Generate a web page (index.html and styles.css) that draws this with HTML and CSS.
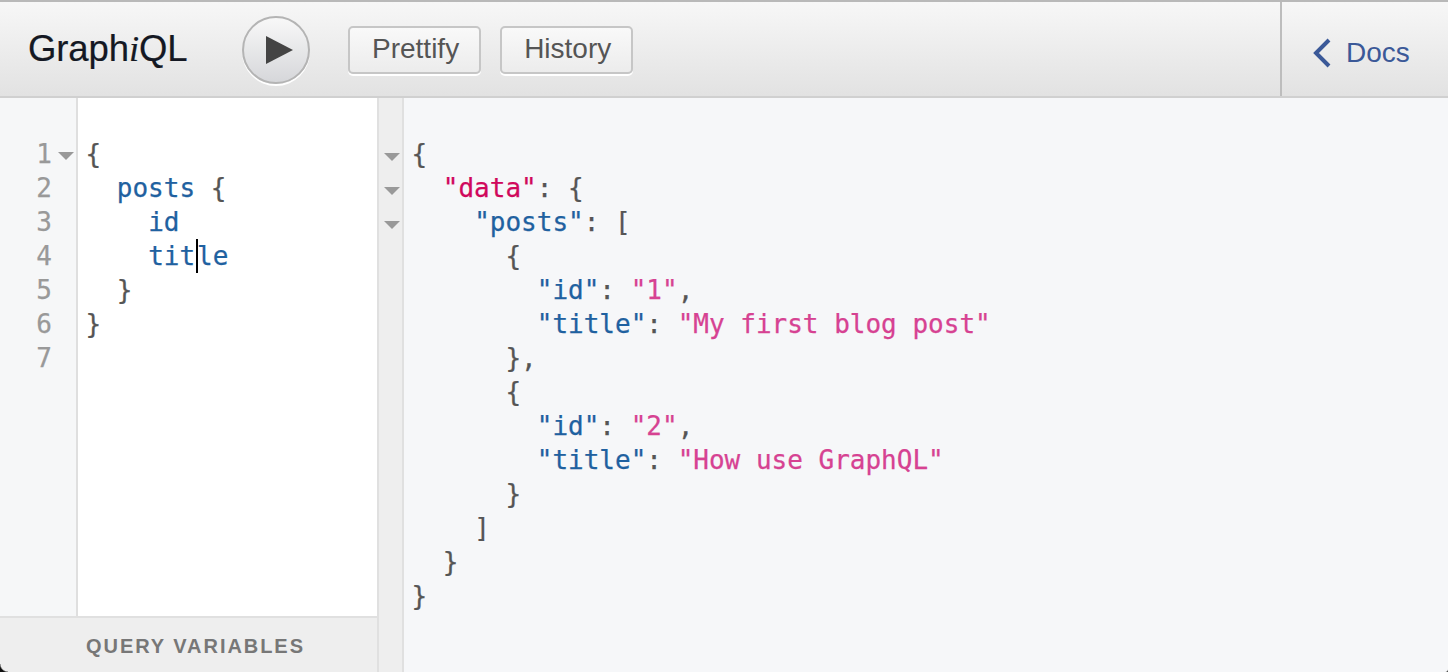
FILE: index.html
```html
<!DOCTYPE html>
<html lang="en">
<head>
<meta charset="utf-8">
<title>GraphiQL</title>
<link rel="stylesheet" href="styles.css">
</head>
<body>
<div class="app">
  <header class="topbar">
    <div class="title">Graph<em>i</em>QL</div>
    <button class="run" aria-label="Run">
      <svg width="27" height="28" viewBox="0 0 27 28"><path class="run-tri" d="M0 0L27 14L0 28Z"/></svg>
    </button>
    <button class="tool first">Prettify</button>
    <button class="tool">History</button>
    <div class="spacer"></div>
    <div class="docs">
      <svg width="22" height="32" viewBox="0 0 22 32"><path class="chev" d="M18 3L5 16L18 29"/></svg>
      <span>Docs</span>
    </div>
  </header>
  <main class="panes">
    <section class="left">
      <div class="editor">
        <div class="gutter">
          <div class="ln">1<svg class="fold" width="16" height="8" viewBox="0 0 16 8"><path d="M0 0H16L8 8Z"/></svg></div>
          <div class="ln">2</div>
          <div class="ln">3</div>
          <div class="ln">4</div>
          <div class="ln">5</div>
          <div class="ln">6</div>
          <div class="ln">7</div>
        </div>
        <pre class="code query"><span class="p">{</span>
  <span class="f">posts</span> <span class="p">{</span>
    <span class="f">id</span>
    <span class="f">tit<span class="cursor"></span>le</span>
  <span class="p">}</span>
<span class="p">}</span>
</pre>
      </div>
      <div class="vars">QUERY VARIABLES</div>
    </section>
    <section class="result">
      <div class="rgutter">
        <div class="rline"><svg class="fold" width="16" height="8" viewBox="0 0 16 8"><path d="M0 0H16L8 8Z"/></svg></div>
        <div class="rline"><svg class="fold" width="16" height="8" viewBox="0 0 16 8"><path d="M0 0H16L8 8Z"/></svg></div>
        <div class="rline"><svg class="fold" width="16" height="8" viewBox="0 0 16 8"><path d="M0 0H16L8 8Z"/></svg></div>
      </div>
      <pre class="code output"><span class="p">{</span>
  <span class="k">"data"</span><span class="p">: {</span>
    <span class="kb">"posts"</span><span class="p">: [</span>
      <span class="p">{</span>
        <span class="kb">"id"</span><span class="p">:</span> <span class="s">"1"</span><span class="p">,</span>
        <span class="kb">"title"</span><span class="p">:</span> <span class="s">"My first blog post"</span>
      <span class="p">},</span>
      <span class="p">{</span>
        <span class="kb">"id"</span><span class="p">:</span> <span class="s">"2"</span><span class="p">,</span>
        <span class="kb">"title"</span><span class="p">:</span> <span class="s">"How use GraphQL"</span>
      <span class="p">}</span>
    <span class="p">]</span>
  <span class="p">}</span>
<span class="p">}</span></pre>
    </section>
  </main>
  <div class="corner-left"></div>
  <div class="corner-right"></div>
</div>
</body>
</html>
```
FILE: styles.css
```css
* { box-sizing: border-box; }
html, body { margin: 0; height: 100%; overflow: hidden; }
.app { position: relative; width: 1448px; height: 672px; display: flex; flex-direction: column; font-family: "Liberation Sans", Arial, sans-serif; }
.corner-left { position: absolute; left: 0; bottom: 0; width: 8px; height: 8px; background: radial-gradient(circle at 100% 0, transparent 7px, #111 8.5px); }
.corner-right { position: absolute; right: 0; bottom: 0; width: 3px; height: 3px; background: radial-gradient(circle at 0 0, transparent 2.5px, #555 3.5px); }
.topbar {
  height: 98px; display: flex; align-items: stretch; flex: none;
  border-top: 2px solid #b9b9b9; border-bottom: 2px solid #d0d0d0;
  background: linear-gradient(#f7f7f7, #e2e2e2);
}
.title { margin: 27px 0 0 28px; width: 160px; font-size: 36.5px; line-height: 40px; color: #141823; letter-spacing: -0.1px; white-space: nowrap; -webkit-text-stroke: 0.2px currentColor; }
.title em { font-family: "Liberation Serif", serif; font-style: italic; }
.run {
  margin: 14px 0 0 54px; width: 68px; height: 68px; border-radius: 50%; padding: 0 0 0 6px;
  border: 2px solid #b4b4b4; background: linear-gradient(#f8f8f8, #d6d7da);
  box-shadow: 0 2px 0 #fff; display: flex; align-items: center; justify-content: center;
}
.run-tri { fill: #444; }
.tool {
  margin: 24px 0 0 19px; height: 48px; padding: 0 20px 2px 22px; border: 2px solid #c6c6c6; border-radius: 5px;
  background: linear-gradient(#f9f9f9, #ececec); box-shadow: 0 2px 0 #fff;
  font: 28px "Liberation Sans", Arial, sans-serif; color: #555;
}
.tool.first { margin-left: 38px; }
.spacer { flex: 1; }
.docs {
  width: 168px; border-left: 2px solid #bdbdbd; display: flex; align-items: center; gap: 13px; padding: 8px 0 0 29px;
  font-size: 28px; color: #3b5998;
}
.chev { fill: none; stroke: #3b5998; stroke-width: 4; }
.panes { flex: 1; display: flex; min-height: 0; }
.left { width: 377px; flex: none; display: flex; flex-direction: column; background: #fff; }
.editor { flex: 1; display: flex; min-height: 0; }
.gutter { width: 78px; flex: none; background: #f6f7f8; border-right: 2px solid #dfdfdf; padding-top: 39px; }
.ln {
  position: relative; height: 34px; padding-right: 24px; text-align: right;
  font: 26px/34px "DejaVu Sans Mono", monospace; color: #999; -webkit-text-stroke: 0.25px currentColor;
}
.ln .fold { position: absolute; left: 58px; top: 15px; }
.fold path { fill: #999; }
.code { margin: 0; font: 26px/34px "DejaVu Sans Mono", monospace; color: #555; -webkit-text-stroke: 0.25px currentColor; }
.query { padding: 39px 0 0 7.5px; }
.output { padding: 39px 0 0 7.5px; flex: 1; }
.f { color: #1f61a0; }
.p { color: #555; }
.k { color: #d0085c; }
.kb { color: #1f61a0; }
.s { color: #d64292; }
.cursor { display: inline-block; width: 0; height: 34px; border-left: 2px solid #000; margin-left: 1px; margin-right: -1px; vertical-align: -8px; }
.vars {
  height: 56px; flex: none; border-top: 2px solid #e0e0e0; background: #eeeeee; text-align: center; padding-left: 14px;
  font-size: 20px; line-height: 57px; font-weight: bold; letter-spacing: 1.95px; color: #777;
}
.result { flex: 1; display: flex; background: #f6f7f9; min-width: 0; }
.rgutter { width: 27px; flex: none; background: #eeeeee; border-left: 2px solid #e0e0e0; border-right: 2px solid #e0e0e0; padding-top: 41px; }
.rline { height: 34px; position: relative; }
.rline .fold { position: absolute; left: 5px; top: 14px; }
```
